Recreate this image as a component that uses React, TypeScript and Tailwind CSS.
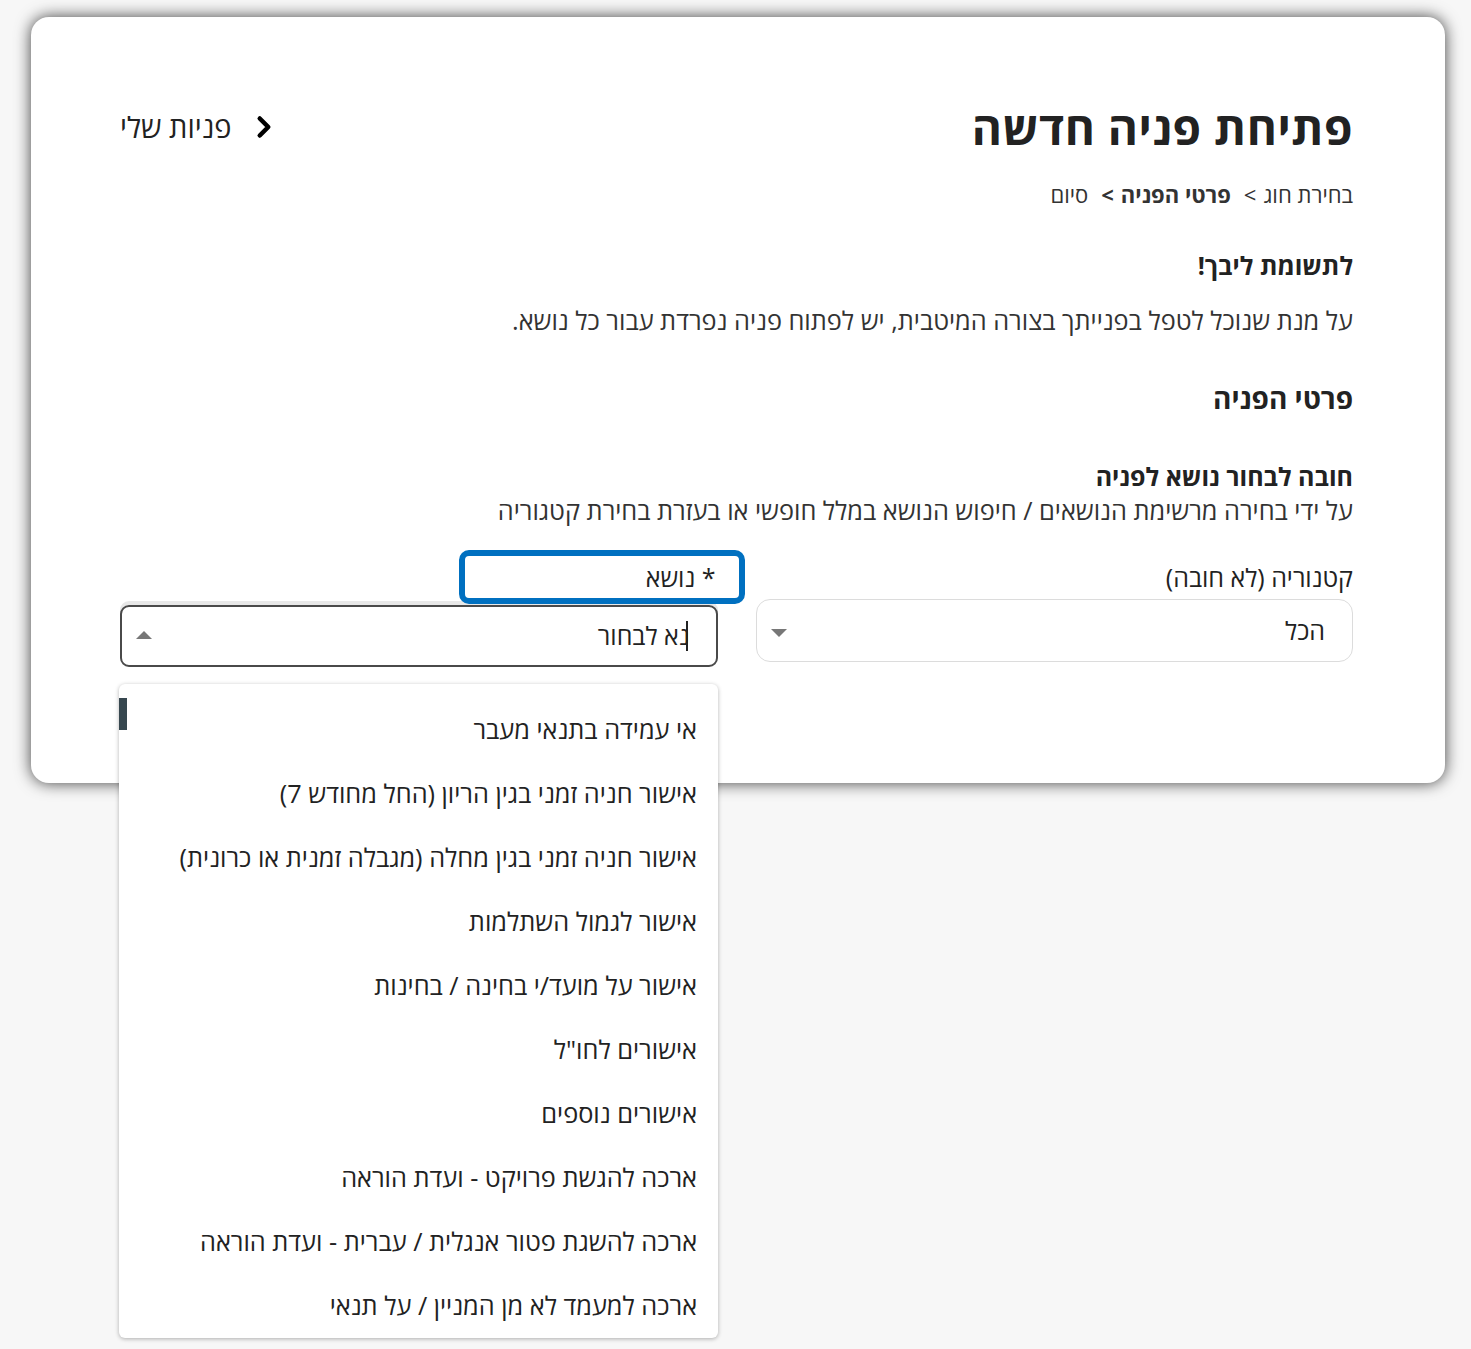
import { ChevronRight } from "lucide-react";

const topics = [
  "אי עמידה בתנאי מעבר",
  "אישור חניה זמני בגין הריון (החל מחודש 7)",
  "אישור חניה זמני בגין מחלה (מגבלה זמנית או כרונית)",
  "אישור לגמול השתלמות",
  "אישור על מועד/י בחינה / בחינות",
  "אישורים לחו\"ל",
  "אישורים נוספים",
  "ארכה להגשת פרויקט - ועדת הוראה",
  "ארכה להשגת פטור אנגלית / עברית - ועדת הוראה",
  "ארכה למעמד לא מן המניין / על תנאי",
];

export default function App() {
  return (
    <div
      className="min-h-screen bg-[#f7f7f7] pt-[17px] pl-[31px] pr-[26px] text-[#222]"
      style={{ fontFamily: '"Open Sans", "Liberation Sans", "DejaVu Sans", sans-serif' }}
    >
      <div
        dir="rtl"
        className="relative h-[766px] rounded-[18px] bg-white pt-[82px] pr-[92px] pl-[89px] shadow-[0_0_16px_rgba(0,0,0,0.75)]"
      >
        <div className="flex items-center justify-between">
          <h1 className="text-[46px] font-bold leading-[56px] tracking-[0.5px] text-[#222]">פתיחת פניה חדשה</h1>
          <a className="flex items-center gap-[16px] text-[29px] text-[#222]">
            <ChevronRight className="h-[34px] w-[34px] text-black" strokeWidth={3.2} />
            <span>פניות שלי</span>
          </a>
        </div>

        <div className="mt-[24px] flex items-center gap-[7px] text-[22px] leading-[30px] text-[#333]">
          <span>בחירת חוג</span>
          <span>&gt;</span>
          <span className="mr-[6px] font-bold">פרטי הפניה</span>
          <span className="font-bold">&gt;</span>
          <span className="mr-[6px]">סיום</span>
        </div>

        <h3 className="mt-[40px] text-[25px] font-bold leading-[32px]">לתשומת ליבך!</h3>
        <p className="mt-[22px] text-[25.3px] leading-[34px] text-[#333]">
          על מנת שנוכל לטפל בפנייתך בצורה המיטבית, יש לפתוח פניה נפרדת עבור כל נושא.
        </p>

        <h2 className="mt-[43px] text-[28px] font-bold leading-[36px]">פרטי הפניה</h2>

        <h3 className="mt-[43px] text-[25px] font-bold leading-[34px]">חובה לבחור נושא לפניה</h3>
        <p className="text-[25.3px] leading-[34px] text-[#333]">
          על ידי בחירה מרשימת הנושאים / חיפוש הנושא במלל חופשי או בעזרת בחירת קטגוריה
        </p>

        <div className="mt-[33px] grid grid-cols-2 gap-[38px]">
          <div>
            <div className="h-[34px] text-[25px] leading-[34px]">קטנוריה (לא חובה)</div>
            <div className="mt-[5px] flex h-[63px] items-center justify-between rounded-[14px] border border-[#dcdcdc] pr-[27px] pl-[14px] text-[25px]">
              <span>הכל</span>
              <span className="mt-[4px] h-0 w-0 border-x-[8px] border-t-[8px] border-x-transparent border-t-[#777]" />
            </div>
          </div>

          <div className="relative">
            <div className="relative h-[34px] text-[25px] leading-[34px]">
              <span className="relative z-10 mr-[2px]">* נושא</span>
              <div className="absolute -top-[10px] -right-[27px] h-[54px] w-[286px] rounded-[10px] border-[6px] border-[#0070c0]" />
            </div>
            <div className="mt-[11px] flex h-[62px] items-center justify-between rounded-[9px] border-2 border-[#4a4a4a] pr-[26px] pl-[14px] text-[25px] shadow-[0_-4px_0_#e8e8e8]">
              <span className="flex items-center">
                <span className="mr-[2px] inline-block h-[30px] w-[2px] bg-[#222]" />
                <span className="-mr-[4px]">נא לבחור</span>
              </span>
              <span className="-mt-[2px] h-0 w-0 border-x-[8px] border-b-[8px] border-x-transparent border-b-[#777]" />
            </div>

            <div className="absolute top-[124px] -left-[1px] z-20 h-[654px] w-[599px] overflow-hidden rounded-[6px] bg-white pt-[14px] shadow-[0_1px_4px_rgba(0,0,0,0.3)]">
              <div className="absolute top-[14px] left-0 h-[32px] w-[8px] bg-[#37474f]" />
              {topics.map((t) => (
                <div key={t} className="flex h-[64px] items-center pr-[21px] text-[25.3px] text-[#222]">
                  {t}
                </div>
              ))}
            </div>
          </div>
        </div>
      </div>
    </div>
  );
}
